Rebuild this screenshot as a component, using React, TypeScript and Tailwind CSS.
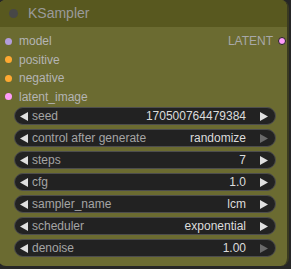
const inputs = [
  { name: "model", color: "bg-[#b39ddb]" },
  { name: "positive", color: "bg-[#ffa931]" },
  { name: "negative", color: "bg-[#ffa931]" },
  { name: "latent_image", color: "bg-[#ff9cf9]" },
];

const widgets = [
  { label: "seed", value: "170500764479384", dimRight: false },
  { label: "control after generate", value: "randomize", dimRight: true },
  { label: "steps", value: "7", dimRight: false },
  { label: "cfg", value: "1.0", dimRight: false },
  { label: "sampler_name", value: "lcm", dimRight: false },
  { label: "scheduler", value: "exponential", dimRight: false },
  { label: "denoise", value: "1.00", dimRight: true },
];

const Arrow = ({ dir, dim }: { dir: "left" | "right"; dim?: boolean }) => (
  <svg width="8" height="9" viewBox="0 0 8 9" className="shrink-0">
    <polygon
      points={dir === "left" ? "8,0 8,9 0,4.5" : "0,0 0,9 8,4.5"}
      fill={dim ? "#6a6a6a" : "#e0e0e0"}
    />
  </svg>
);

export default function App() {
  return (
    <div
      className="w-[291px] h-[269px] bg-[#262626] overflow-hidden"
      style={{ fontFamily: '"Liberation Sans", Arial, sans-serif' }}
    >
      <div className="ml-[-2px] w-[291px] h-[266px] rounded-[8px] bg-[#6b6b31] overflow-hidden border-r-2 border-[#3a3a20]">
        {/* title */}
        <div className="h-[27px] bg-[#58581f] flex items-center pl-[11px]">
          <div className="w-[9px] h-[9px] rounded-full bg-[#474747]" />
          <span className="ml-[10px] text-[14px] text-[#9a9a9a]">KSampler</span>
        </div>

        {/* slots */}
        <div className="pt-[5px] relative">
          {inputs.map((s) => (
            <div key={s.name} className="h-[18.5px] flex items-center pl-[7px]">
              <div className={`w-[7px] h-[7px] rounded-full ${s.color}`} />
              <span className="ml-[7px] text-[12px] text-[#b4b4b4]">{s.name}</span>
            </div>
          ))}
          <div className="absolute right-[1px] top-[5px] h-[18.5px] flex items-center">
            <span className="text-[12px] text-[#a8a8a8]">LATENT</span>
            <div className="ml-[5px] w-[8px] h-[8px] rounded-full bg-[#ff9cf9] border border-[#222]" />
          </div>
        </div>

        {/* widgets */}
        <div className="mt-[1px] pl-[16px] pr-[11px] flex flex-col gap-[4px]">
          {widgets.map((w) => (
            <div
              key={w.label}
              className="h-[18px] rounded-full bg-[#222] border border-[#4d4d4d] flex items-center pl-[5px] pr-[7px]"
            >
              <Arrow dir="left" />
              <span className="ml-[4px] text-[12px] text-[#a5a5a5] whitespace-nowrap">{w.label}</span>
              <span className="ml-auto mr-[14px] text-[12px] text-[#dcdcdc] whitespace-nowrap">{w.value}</span>
              <Arrow dir="right" dim={w.dimRight} />
            </div>
          ))}
        </div>
      </div>
    </div>
  );
}
